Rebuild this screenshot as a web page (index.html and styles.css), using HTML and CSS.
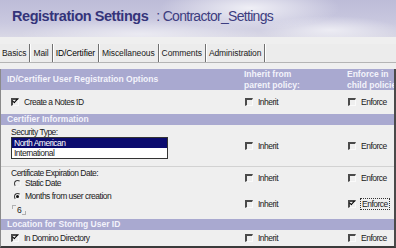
FILE: index.html
```html
<!DOCTYPE html>
<html lang="en">
<head>
    <meta charset="utf-8">
    <title>Registration Settings</title>
    <link rel="stylesheet" href="styles.css">
</head>
<body>
    <div class="banner">
        <span class="banner-title">Registration Settings</span>
        <span class="banner-doc">: Contractor_Settings</span>
    </div>
    <div class="tabs">
        <span class="tab">Basics</span>
        <span class="tab">Mail</span>
        <span class="tab tab-active">ID/Certifier</span>
        <span class="tab">Miscellaneous</span>
        <span class="tab">Comments</span>
        <span class="tab">Administration</span>
    </div>

    <div class="form-frame">
        <!-- Section header -->
        <div class="row band band-tall">
            <div>ID/Certifier User Registration Options</div>
            <div>Inherit from<br>parent policy:</div>
            <div>Enforce in<br>child policies:</div>
        </div>
        <div class="row row-notes">
            <label class="opt"><span class="cb checked"></span>Create a Notes ID</label>
            <label class="opt"><span class="cb"></span>Inherit</label>
            <label class="opt"><span class="cb"></span>Enforce</label>
        </div>

        <div class="band">Certifier Information</div>
        <div class="row row-security">
            <div class="field">
                <div class="field-label">Security Type:</div>
                <div class="listbox">
                    <div class="list-item selected">North American</div>
                    <div class="list-item">International</div>
                </div>
            </div>
            <label class="opt"><span class="cb"></span>Inherit</label>
            <label class="opt"><span class="cb"></span>Enforce</label>
        </div>
        <div class="row row-static">
            <div class="field">
                <div class="field-label">Certificate Expiration Date:</div>
                <label class="opt radio-opt"><span class="rb"></span>Static Date</label>
            </div>
            <label class="opt"><span class="cb"></span>Inherit</label>
            <label class="opt"><span class="cb"></span>Enforce</label>
        </div>
        <div class="row row-months">
            <div class="field">
                <label class="opt radio-opt"><span class="rb checked"></span>Months from user creation</label>
                <div class="months-field"><span class="months-value">6</span></div>
            </div>
            <label class="opt"><span class="cb"></span>Inherit</label>
            <label class="opt"><span class="cb checked"></span><span class="focus">Enforce</span></label>
        </div>

        <div class="band">Location for Storing User ID</div>
        <div class="row row-location">
            <label class="opt"><span class="cb checked"></span>In Domino Directory</label>
            <label class="opt"><span class="cb"></span>Inherit</label>
            <label class="opt"><span class="cb"></span>Enforce</label>
        </div>
    </div>
</body>
</html>
```

FILE: styles.css
```css
/* General */
body {
    margin: 0;
    width: 396px;
    height: 248px;
    overflow: hidden;
    background-color: #efefef;
    font-family: "Liberation Sans", Arial, sans-serif;
    font-size: 8.5px;
    letter-spacing: -0.5px;
    color: #1a1a1a;
}

/* Banner with the cloudy background */
.banner {
    height: 37px;
    box-sizing: border-box;
    padding: 8px 0 0 12px;
    white-space: nowrap;
    background:
        radial-gradient(ellipse 90px 22px at 250px 8px, rgba(255, 255, 255, 0.75), rgba(255, 255, 255, 0)),
        radial-gradient(ellipse 70px 14px at 330px 30px, rgba(255, 255, 255, 0.6), rgba(255, 255, 255, 0)),
        radial-gradient(ellipse 120px 16px at 140px 34px, rgba(255, 255, 255, 0.5), rgba(255, 255, 255, 0)),
        linear-gradient(180deg, #bdbcd8 0%, #c9c8df 60%, #d9d8e6 100%);
}

.banner-title {
    font-size: 14.5px;
    font-weight: bold;
    letter-spacing: -0.45px;
    color: #34347a;
}

.banner-doc {
    margin-left: 6px;
    font-size: 14px;
    letter-spacing: -0.7px;
    color: #3d3d80;
}

/* Tabs */
.tabs {
    display: flex;
    align-items: stretch;
    height: 18px;
    margin-top: 7px;
    padding-left: 2px;
    border-bottom: 1px solid #b4b4b4;
    background-color: #ececec;
}

.tab {
    display: flex;
    align-items: center;
    padding: 0 3px 0 0;
    margin-right: 3px;
    border-right: 1px solid #707070;
    box-shadow: 1px 0 0 #ffffff;
    letter-spacing: -0.1px;
    color: #202020;
}

.tab-active {
    color: #000;
}

/* Form frame */
.form-frame {
    margin-top: 6px;
    height: 177px;
    border-left: 1px solid #8a8a8a;
    border-right: 2px solid #4a4a4a;
    border-bottom: 2px solid #3a3a3a;
    overflow: hidden;
}

.row {
    display: grid;
    grid-template-columns: 239px 103px 1fr;
    align-items: center;
    white-space: nowrap;
}

.row > :first-child {
    padding-left: 10px;
}

.row > :nth-child(n+2) {
    padding-left: 5px;
}

/* Section bands */
.band {
    height: 11px;
    padding-left: 6px;
    background-color: #a9a9d0;
    color: #f3f3fb;
    font-weight: bold;
    letter-spacing: 0;
    line-height: 11px;
    overflow: hidden;
}

.band-tall {
    height: 21px;
    padding-left: 0;
    line-height: 10.5px;
}

.band-tall > :first-child {
    padding-left: 6px;
}

.band-tall > :nth-child(n+2) {
    padding-left: 4px;
    overflow: hidden;
}

/* Rows */
.row-notes {
    height: 24px;
}

.row-security {
    height: 41px;
    border-bottom: 1px solid #d2d2d2;
}

.row-static {
    height: 22px;
}

.row-months {
    height: 30px;
}

.row-location {
    height: 16px;
}

.field {
    align-self: start;
}

.field-label {
    line-height: 9px;
}

.row-security .field {
    padding-top: 3px;
}

.row-static .field {
    padding-top: 2px;
}

.row-months .field {
    padding-top: 2px;
}

/* Check boxes and radio buttons */
.opt {
    display: flex;
    align-items: center;
    gap: 5px;
    line-height: 10px;
}

.cb {
    width: 5px;
    height: 5px;
    border-top: 2px solid #4a4a4a;
    border-left: 2px solid #4a4a4a;
    border-right: 1px solid #fafafa;
    border-bottom: 1px solid #fafafa;
    position: relative;
}

.cb.checked::after {
    content: "";
    position: absolute;
    left: 0px;
    top: -1px;
    width: 4px;
    height: 2px;
    border-left: 1.5px solid #000;
    border-bottom: 1.5px solid #000;
    transform: rotate(-48deg);
    transform-origin: 2px 2px;
}

.radio-opt {
    gap: 4px;
    padding-left: 3px;
}

.rb {
    width: 5px;
    height: 5px;
    border-radius: 50%;
    border: 1.5px solid;
    border-color: #3a3a3a #f6f6f6 #f6f6f6 #3a3a3a;
    display: flex;
    align-items: center;
    justify-content: center;
}

.rb.checked::after {
    content: "";
    width: 3px;
    height: 3px;
    border-radius: 50%;
    background-color: #111;
}

.focus {
    outline: 1px dotted #333;
    outline-offset: 0;
    padding: 0 1px;
}

/* Security type list */
.listbox {
    width: 155px;
    border: 1px solid #333;
    background-color: #fff;
}

.list-item {
    height: 10px;
    line-height: 10px;
    padding-left: 2px;
}

.list-item.selected {
    background-color: #0b0b6e;
    color: #fff;
}

/* Months field */
.months-field {
    display: flex;
    width: fit-content;
    margin-top: 4px;
    margin-left: 1px;
}

.months-field::before,
.months-field::after {
    content: "";
    width: 3px;
    height: 3px;
}

.months-field::before {
    align-self: flex-start;
    border-top: 1px solid #b0b0b0;
    border-left: 1px solid #b0b0b0;
}

.months-field::after {
    align-self: flex-end;
    border-bottom: 1px solid #b0b0b0;
    border-right: 1px solid #b0b0b0;
}

.months-value {
    padding: 1px 1px 0 1px;
    line-height: 9px;
}
```
